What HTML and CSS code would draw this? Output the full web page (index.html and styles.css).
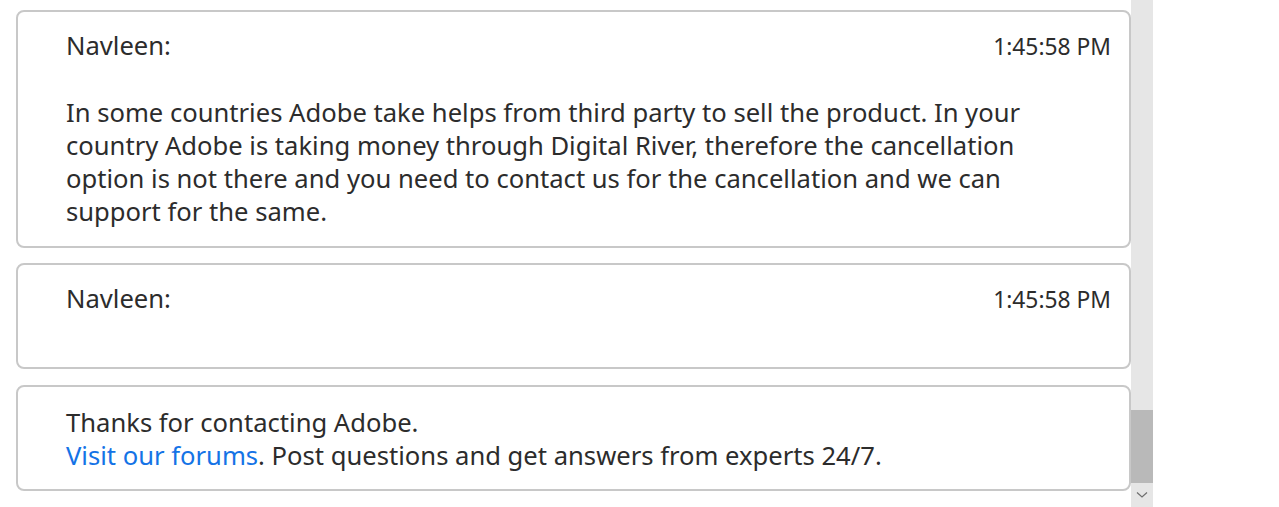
FILE: index.html
```html
<!DOCTYPE html>
<html lang="en">
<head>
<meta charset="utf-8">
<title>Chat</title>
<link rel="stylesheet" href="styles.css">
</head>
<body>
<div class="page">
  <div class="chat">
    <div class="card">
      <div class="header">
        <span class="name">Navleen:</span>
        <span class="time">1:45:58 PM</span>
      </div>
      <p class="msg">In some countries Adobe take helps from third party to sell the product. In your country Adobe is taking money through Digital River, therefore the cancellation option is not there and you need to contact us for the cancellation and we can support for the same.</p>
    </div>
    <div class="card">
      <div class="header">
        <span class="name">Navleen:</span>
        <span class="time">1:45:58 PM</span>
      </div>
      <p class="msg"></p>
    </div>
    <div class="card card-note">
      <p class="note">Thanks for contacting Adobe.<br><a class="link" href="#">Visit our forums</a>. Post questions and get answers from experts 24/7.</p>
    </div>
  </div>
  <div class="scrollbar">
    <div class="track"></div>
    <div class="thumb"></div>
    <div class="arrow">
      <svg width="12" height="8" viewBox="0 0 12 8"><path d="M1 1.5 L6 6 L11 1.5" fill="none" stroke="#6e6e6e" stroke-width="1.2"/></svg>
    </div>
  </div>
</div>
</body>
</html>
```

FILE: styles.css
```css
html, body {
  margin: 0;
  padding: 0;
  background: #ffffff;
}

.page {
  display: flex;
  height: 507px;
  overflow: hidden;
  font-family: "Noto Sans", "Open Sans", sans-serif;
  color: #2c2c2c;
}

.chat {
  width: 1131px;
  box-sizing: border-box;
  padding: 10px 0 0 16px;
  display: flex;
  flex-direction: column;
  gap: 15px;
}

.card {
  border: 2px solid #c8c8c8;
  border-radius: 8px;
  padding: 17px 18px 18px 48px;
  font-size: 25.6px;
  line-height: 33px;
}

.card-note {
  margin-top: 1px;
  padding-top: 19px;
  padding-bottom: 17px;
}

.header {
  display: flex;
  justify-content: space-between;
  align-items: baseline;
}

.time {
  font-size: 22.8px;
}

.msg {
  margin: 33px 20px 0 0;
}

.note {
  margin: 0;
}

.link {
  color: #1473e6;
  text-decoration: none;
}

.scrollbar {
  width: 22px;
  background: #e6e6e6;
  display: flex;
  flex-direction: column;
}

.track {
  flex: 1;
}

.thumb {
  height: 73px;
  background: #b9b9b9;
}

.arrow {
  height: 24px;
  display: flex;
  align-items: center;
  justify-content: center;
}
```
